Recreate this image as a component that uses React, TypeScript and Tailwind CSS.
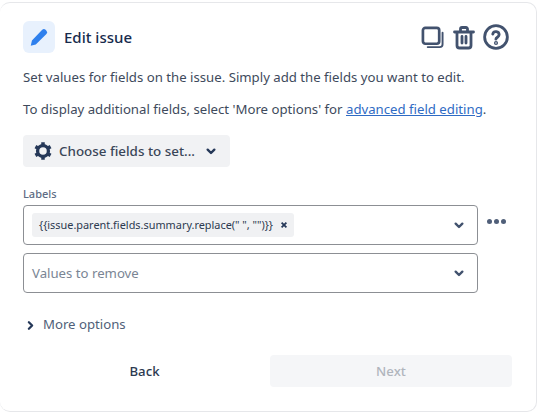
import React from "react";

const Chevron = ({ className = "" }: { className?: string }) => (
  <svg viewBox="0 0 24 24" className={className} fill="none" stroke="currentColor" strokeWidth="3.6" strokeLinecap="round" strokeLinejoin="round">
    <path d="M7 10l5 5 5-5" />
  </svg>
);

function SelectBox({ children }: { children: React.ReactNode }) {
  return (
    <div className="flex h-10 w-[455px] items-center justify-between rounded-[4px] border border-[#8c8f94] bg-white pl-[8px] pr-[10px]">
      {children}
      <Chevron className="h-4 w-4 text-[#42526e]" />
    </div>
  );
}

export default function App() {
  return (
    <div className="h-[414px] w-[538px] bg-white pt-[2px] font-['Noto_Sans','Open_Sans',sans-serif] text-[#172b4d]">
      <div className="h-[410px] w-[537px] rounded-[10px] border border-l-0 border-[#e6e7ea] bg-white pl-[23px] pt-[18px]">
        <div className="flex h-8 w-[486px] items-center">
          <div className="flex h-8 w-8 items-center justify-center rounded-[6px] bg-[#e8f1fd]">
            <svg viewBox="0 0 24 24" className="h-[22px] w-[22px] text-[#2f80ed]" fill="currentColor">
              <path d="M3 21.500l1.300-5.600L15.500 4.200a2.600 2.600 0 0 1 3.700 0l.9.900a2.600 2.600 0 0 1 0 3.700L8.500 20.300z" />
            </svg>
          </div>
          <span className="ml-[9px] text-[15px] font-medium leading-none">Edit issue</span>
          <div className="ml-auto flex items-center gap-[7px] text-[#42526e]">
            <svg viewBox="0 0 24 24" className="mr-[1px] h-[23px] w-[23px]" fill="none" stroke="currentColor" strokeWidth="2.800" strokeLinejoin="round" strokeLinecap="round">
              <rect x="2" y="2" width="17" height="16.500" rx="2.500" />
              <path d="M22.500 7v12a3 3 0 0 1-3 3H7" strokeWidth="2" />
            </svg>
            <svg viewBox="0 0 24 24" className="h-[25px] w-[24px]" fill="none" stroke="currentColor" strokeWidth="2.800" strokeLinejoin="round" strokeLinecap="round">
              <path d="M2.500 6.500h19M8.500 6V3.500a1.500 1.500 0 0 1 1.500-1.500h4a1.500 1.500 0 0 1 1.500 1.500V6M5 7v13a2.500 2.500 0 0 0 2.500 2.500h9A2.500 2.500 0 0 0 19 20V7M10 11v6.500M14 11v6.500" />
            </svg>
            <svg viewBox="0 0 24 24" className="h-[26px] w-[26px]" fill="none" stroke="currentColor" strokeWidth="2.600" strokeLinecap="round" strokeLinejoin="round">
              <circle cx="12" cy="12" r="10.500" />
              <path d="M9 9.300a3 3 0 0 1 5.900.7c0 2-3 2.400-3 4" />
              <circle cx="12" cy="17.500" r="0.600" />
            </svg>
          </div>
        </div>
        <p className="mt-[14px] text-[13.2px] leading-5 text-[#3e4a5c]">Set values for fields on the issue. Simply add the fields you want to edit.</p>
        <p className="mt-[12px] text-[13.2px] leading-5 text-[#3e4a5c]">
          To display additional fields, select 'More options' for{" "}
          <span className="text-[#2f6bc4] underline">advanced field editing</span>.
        </p>
        <div className="mt-[16px] flex h-8 w-[207px] items-center rounded-[4px] bg-[#f1f2f4] pl-[10px]">
          <svg viewBox="0 0 24 24" className="h-[20px] w-[20px] text-[#253858]" fill="none" stroke="currentColor">
            <circle cx="12" cy="12" r="6.500" strokeWidth="4" />
            <path d="M12 1.500v4M12 18.500v4M2.900 6.750l3.500 2M17.600 15.250l3.500 2M21.100 6.750l-3.500 2M6.400 15.250l-3.500 2" strokeWidth="4.200" />
          </svg>
          <span className="ml-[6px] text-[13.4px] font-medium text-[#3a4658]">Choose fields to set...</span>
          <Chevron className="ml-[8px] h-4 w-4 text-[#253858]" />
        </div>
        <div className="mt-[18px] text-[11px] font-medium leading-[18px] text-[#5e6c84]">Labels</div>
        <div className="mt-[2px] flex w-[505px] items-start gap-[9px]">
          <SelectBox>
            <div className="flex h-6 items-center rounded-[3px] bg-[#f0f1f3] pl-[7px] pr-[6px]">
              <span className="text-[10.9px] text-[#2c3a50]">{'{{issue.parent.fields.summary.replace(" ", "")}}'}</span>
              <svg viewBox="0 0 10 10" className="ml-[7px] h-2 w-2 text-[#253858]" fill="none" stroke="currentColor" strokeWidth="2.200">
                <path d="M2 2l6 6M8 2l-6 6" />
              </svg>
            </div>
          </SelectBox>
          <div className="mt-[14px] flex gap-[2.500px]">
            <span className="h-[4.500px] w-[4.500px] rounded-full bg-[#505f79]" />
            <span className="h-[4.500px] w-[4.500px] rounded-full bg-[#505f79]" />
            <span className="h-[4.500px] w-[4.500px] rounded-full bg-[#505f79]" />
          </div>
        </div>
        <div className="mt-2">
          <SelectBox>
            <span className="pt-[1px] text-[13.2px] text-[#7a8594]">Values to remove</span>
          </SelectBox>
        </div>
        <div className="mt-[22px] flex h-5 items-center pl-[1px] text-[13.2px] text-[#505f79]">
          <svg viewBox="0 0 24 24" className="h-[13px] w-[13px] text-[#253858]" fill="none" stroke="currentColor" strokeWidth="4.200" strokeLinecap="round" strokeLinejoin="round">
            <path d="M9 6l6 6-6 6" />
          </svg>
          <span className="ml-[6px]">More options</span>
        </div>
        <div className="mt-[20px] flex w-[489px] gap-[4px] text-[13.2px] font-medium">
          <div className="flex h-8 w-[243px] items-center justify-center pt-[1px] text-[#2c3a50]">Back</div>
          <div className="flex h-8 w-[242px] items-center justify-center rounded-[4px] bg-[#f5f6f8] pt-[1px] text-[#b0b5bd]">Next</div>
        </div>
      </div>
    </div>
  );
}
